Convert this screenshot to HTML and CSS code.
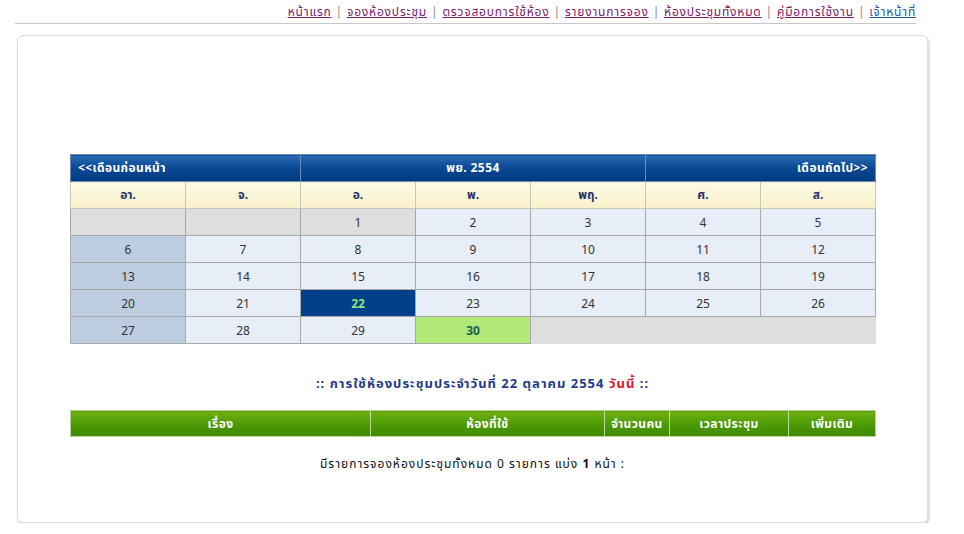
FILE: index.html
```html
<!DOCTYPE html>
<html>
<head>
<meta charset="utf-8">
<link rel="stylesheet" href="styles.css">
</head>
<body>
<div class="nav">
  <a href="#">หน้าแรก</a><span class="sep">|</span>
  <a href="#">จองห้องประชุม</a><span class="sep">|</span>
  <a href="#">ตรวจสอบการใช้ห้อง</a><span class="sep">|</span>
  <a href="#">รายงานการจอง</a><span class="sep">|</span>
  <a href="#">ห้องประชุมทั้งหมด</a><span class="sep">|</span>
  <a href="#">คู่มือการใช้งาน</a><span class="sep">|</span>
  <a href="#" class="blue">เจ้าหน้าที่</a>
</div>
<div class="box">
  <table class="cal">
    <tr class="head">
      <td colspan="2" class="prev">&lt;&lt;เดือนก่อนหน้า</td>
      <td colspan="3" class="month">พย. 2554</td>
      <td colspan="2" class="next">เดือนถัดไป&gt;&gt;</td>
    </tr>
    <tr class="days">
      <td>อา.</td><td>จ.</td><td>อ.</td><td>พ.</td><td>พฤ.</td><td>ศ.</td><td>ส.</td>
    </tr>
    <tr>
      <td class="empty"></td><td class="empty"></td><td class="empty">1</td><td>2</td><td>3</td><td>4</td><td>5</td>
    </tr>
    <tr>
      <td class="sun">6</td><td>7</td><td>8</td><td>9</td><td>10</td><td>11</td><td>12</td>
    </tr>
    <tr>
      <td class="sun">13</td><td>14</td><td>15</td><td>16</td><td>17</td><td>18</td><td>19</td>
    </tr>
    <tr>
      <td class="sun">20</td><td>21</td><td class="today">22</td><td>23</td><td>24</td><td>25</td><td>26</td>
    </tr>
    <tr>
      <td class="sun">27</td><td>28</td><td>29</td><td class="last">30</td><td colspan="3" class="blank"></td>
    </tr>
  </table>

  <div class="title">:: การใช้ห้องประชุมประจำวันที่ 22 ตุลาคม 2554 <span class="red">วันนี้</span> ::</div>

  <table class="list">
    <tr>
      <td class="c1">เรื่อง</td>
      <td class="c2">ห้องที่ใช้</td>
      <td class="c3">จำนวนคน</td>
      <td class="c4">เวลาประชุม</td>
      <td class="c5">เพิ่มเติม</td>
    </tr>
  </table>

  <div class="summary">มีรายการจองห้องประชุมทั้งหมด 0 รายการ แบ่ง <b>1</b> หน้า :</div>
</div>
</body>
</html>
```
FILE: styles.css
```css
body {
  margin: 0;
  background: #fff;
  font-family: "Noto Sans", "Noto Sans Thai", "DejaVu Sans", sans-serif;
  font-size: 11px;
  color: #222;
}
.nav {
  display: flex;
  justify-content: flex-end;
  align-items: center;
  height: 23px;
  margin: 0 48px 0 15px;
  border-bottom: 1px solid #c8c8c8;
  font-size: 12px;
  letter-spacing: 0.8px;
}
.nav a {
  color: #7a1a6a;
  text-decoration: underline;
}
.nav a.blue {
  color: #1a5aa8;
}
.nav .sep {
  color: #888;
  margin: 0 4px;
}
.box {
  margin: 11px 0 0 17px;
  width: 911px;
  height: 488px;
  border: 1px solid #dcdcdc;
  border-radius: 6px;
  box-shadow: 1px 2px 3px #c8c8c8;
  padding-top: 118px;
  box-sizing: border-box;
}
.cal {
  margin-left: 52px;
  width: 806px;
  border-collapse: collapse;
  table-layout: fixed;
}
.cal td {
  height: 26px;
  padding: 0;
  border: 1px solid #a8a8a8;
  text-align: center;
  background: #e7eef7;
  color: #333;
  font-size: 12px;
}
.cal .head td {
  background: linear-gradient(#2d6bb4, #0b4a96 45%, #003a80);
  color: #fff;
  font-weight: bold;
  border-color: #6c8cb8;
  padding: 0 7px;
  letter-spacing: 0.4px;
}
.cal .head .prev { text-align: left; }
.cal .head .next { text-align: right; }
.cal .days td {
  background: linear-gradient(#fefbe6, #f7f0c8);
  color: #25336a;
  font-weight: bold;
  border-color: #c8c8b8;
}
.cal td.empty { background: #dedede; }
.cal td.sun { background: #bccde2; }
.cal td.today {
  background: #00418a;
  color: #8fe87a;
  font-weight: bold;
}
.cal td.last {
  background: #b2ea7a;
  color: #1d5e4a;
  font-weight: bold;
}
.cal td.blank {
  background: #dedede;
  border-color: #dedede;
}
.title {
  margin-top: 30px;
  text-align: center;
  padding-left: 20px;
  color: #233a8a;
  font-weight: bold;
  font-size: 13px;
  letter-spacing: 1px;
  height: 21px;
}
.red { color: #e0141e; }
.list {
  margin: 15px 0 0 52px;
  width: 806px;
  border-collapse: collapse;
  table-layout: fixed;
}
.list td {
  height: 25px;
  padding: 0;
  background: linear-gradient(#72b012, #4c9a04 50%, #3e8a00);
  border: 1px solid #b8d898;
  color: #fff;
  font-weight: bold;
  text-align: center;
  font-size: 12px;
  letter-spacing: 0.4px;
}
.list .c1 { width: 299px; }
.list .c2 { width: 233px; }
.list .c3 { width: 64px; }
.list .c4 { width: 118px; }
.summary {
  margin-top: 18px;
  text-align: center;
  font-size: 12px;
  letter-spacing: 1px;
  color: #111;
}
```
